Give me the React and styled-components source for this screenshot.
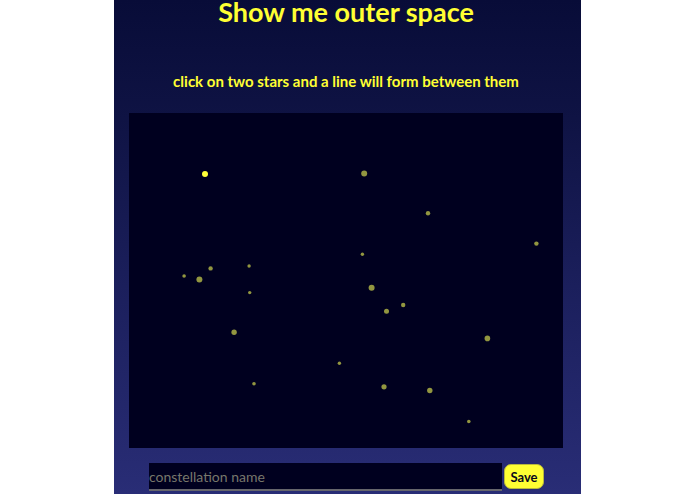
import React, { useState } from "react";
import styled, { createGlobalStyle } from "styled-components";

const GlobalStyle = createGlobalStyle`
  *, *::before, *::after { box-sizing: border-box; }
  body {
    margin: 0;
    background: #ffffff;
    font-family: Lato, "Open Sans", sans-serif;
    font-variant-ligatures: none;
  }
`;

const Page = styled.main`
  width: 100%;
  max-width: 467px;
  min-height: 100vh;
  margin: 0 auto;
  padding: 0 18px 3px 15px;
  display: flex;
  flex-direction: column;
  color: #ffff33;
  background: linear-gradient(#080c38, #0f1344 24%, #1b1f5c 58%, #292d76);
`;

const Title = styled.h1`
  margin: 0;
  font-size: 27px;
  line-height: 24px;
  font-weight: 700;
  text-align: center;
`;

const Hint = styled.p`
  margin: 47px 0 22px;
  font-size: 15px;
  line-height: 20px;
  font-weight: 700;
  text-align: center;
`;

const Sky = styled.svg`
  display: block;
  width: 100%;
  height: auto;
  background: #00001f;
`;

const Star = styled.circle`
  fill: ${({ $lit }) => ($lit ? "#ffff38" : "#929640")};
  cursor: pointer;
`;

const Link = styled.line`
  stroke: #ffff38;
  stroke-width: 1;
`;

const SaveForm = styled.form`
  display: flex;
  align-items: flex-start;
  gap: 2px;
  margin: 15px 19px 0 20px;
`;

const NameInput = styled.input`
  flex: 1;
  min-width: 0;
  height: 28px;
  padding: 0;
  border: 0;
  border-bottom: 2px solid #66666c;
  border-radius: 0;
  outline: 0;
  background: #00001f;
  color: #ffff33;
  font-family: inherit;
  font-size: 14px;

  &::placeholder {
    color: #77776b;
    opacity: 1;
  }
`;

const SaveButton = styled.button`
  width: 40px;
  height: 25px;
  margin-top: 1px;
  padding: 0;
  border: 1px solid #b8b83c;
  border-radius: 7px;
  background: #ffff33;
  color: #08081c;
  font-family: inherit;
  font-size: 13px;
  font-weight: 700;
  cursor: pointer;
`;

const stars = [
  [76, 61, 3],
  [235.2, 60.5, 3],
  [299, 100.2, 2.2],
  [407.4, 130.6, 2.2],
  [233.4, 141.2, 1.7],
  [120.1, 153, 1.7],
  [81.6, 155.4, 2.2],
  [55.1, 163, 1.8],
  [70.4, 166.6, 3],
  [120.7, 179.6, 1.7],
  [242.6, 174.7, 3],
  [274.2, 192, 2.2],
  [257.5, 198.2, 2.5],
  [105.1, 219.3, 2.7],
  [358.4, 225.4, 2.8],
  [210.4, 250.2, 1.7],
  [125, 270.7, 1.8],
  [255, 273.8, 2.6],
  [300.8, 277.5, 2.7],
  [339.8, 308.5, 1.8],
];

export default function App() {
  const [selected, setSelected] = useState(0);
  const [lines, setLines] = useState([]);
  const [name, setName] = useState("");

  const pick = (index) => {
    if (selected === null) {
      setSelected(index);
      return;
    }
    if (selected !== index) setLines([...lines, [selected, index]]);
    setSelected(null);
  };

  return (
    <>
      <GlobalStyle />
      <Page>
        <Title>Show me outer space</Title>
        <Hint>click on two stars and a line will form between them</Hint>
        <Sky viewBox="0 0 434 335" role="img" aria-label="Star field">
          {lines.map(([a, b], i) => (
            <Link key={i} x1={stars[a][0]} y1={stars[a][1]} x2={stars[b][0]} y2={stars[b][1]} />
          ))}
          {stars.map(([x, y, r], i) => (
            <Star key={i} cx={x} cy={y} r={r} $lit={i === selected} onClick={() => pick(i)} />
          ))}
        </Sky>
        <SaveForm onSubmit={(event) => event.preventDefault()}>
          <NameInput
            aria-label="constellation name"
            placeholder="constellation name"
            value={name}
            onChange={(event) => setName(event.target.value)}
          />
          <SaveButton type="submit">Save</SaveButton>
        </SaveForm>
      </Page>
    </>
  );
}
